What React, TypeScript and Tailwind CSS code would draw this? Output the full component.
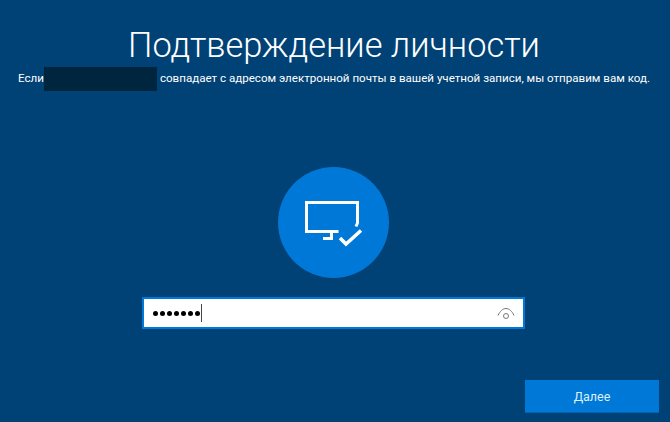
import React from "react";

function MonitorIcon() {
  return (
    <svg width="58" height="47" viewBox="0 0 58 47" className="block">
      <path d="M33.500 30.500H1.500V1.500H52.500V22L51 25.500" fill="none" stroke="#fff" strokeWidth="3" />
      <path d="M26.500 32V37.500H18" fill="none" stroke="#fff" strokeWidth="3" />
      <path d="M35 37L41 43L56 29.500" fill="none" stroke="#fff" strokeWidth="3.500" />
    </svg>
  );
}

export default function App() {
  return (
    <div className="w-[670px] h-[422px] bg-[#004275] text-white flex flex-col overflow-hidden font-['Roboto',sans-serif]">
      <h1 className="mt-[20px] h-[50px] pr-[2px] text-center text-[34.400px] leading-[50px] font-light whitespace-nowrap font-['Roboto',sans-serif]">
        Подтверждение личности
      </h1>
      <p className="mt-[-3px] h-[24px] pl-[18px] flex items-center text-[11.580px] whitespace-nowrap">
        <span>Если</span>
        <span className="mr-[3px] w-[113px] h-[24px] bg-[#00263f]" />
        <span>совпадает с адресом электронной почты в вашей учетной записи, мы отправим вам код.</span>
      </p>
      <div className="mt-[76px] self-center ml-[-3px] w-[111px] h-[111px] rounded-full bg-[#0078d7] flex items-center justify-center">
        <div className="mt-[4px] ml-[1px]"><MonitorIcon /></div>
      </div>
      <div className="mt-[19px] ml-[142px] w-[383px] h-[32px] border-2 border-[#0078d7] bg-white flex items-center pl-[9px] pr-[8px]">
        <div className="flex gap-[2px]">
          {[0, 1, 2, 3, 4, 5, 6].map((i) => (
            <span key={i} className="w-[5px] h-[5px] rounded-full bg-black" />
          ))}
        </div>
        <span className="w-[1px] h-[18px] bg-[#444] ml-[1px]" />
        <svg width="18" height="13" viewBox="0 0 18 13" className="ml-auto">
          <path d="M1 8.500C3 4 6 1.500 9 1.500S15 4 17 8.500" fill="none" stroke="#777" strokeWidth="1" />
          <circle cx="9" cy="9" r="2.500" fill="none" stroke="#777" strokeWidth="1" />
        </svg>
      </div>
      <div className="mt-[51px] mr-[11px] self-end w-[134px] h-[33px] pt-[2px] bg-[#0078d7] border-b border-[#0063b1] flex items-center justify-center text-[12.500px] text-[#dff0fc]">
        Далее
      </div>
    </div>
  );
}
